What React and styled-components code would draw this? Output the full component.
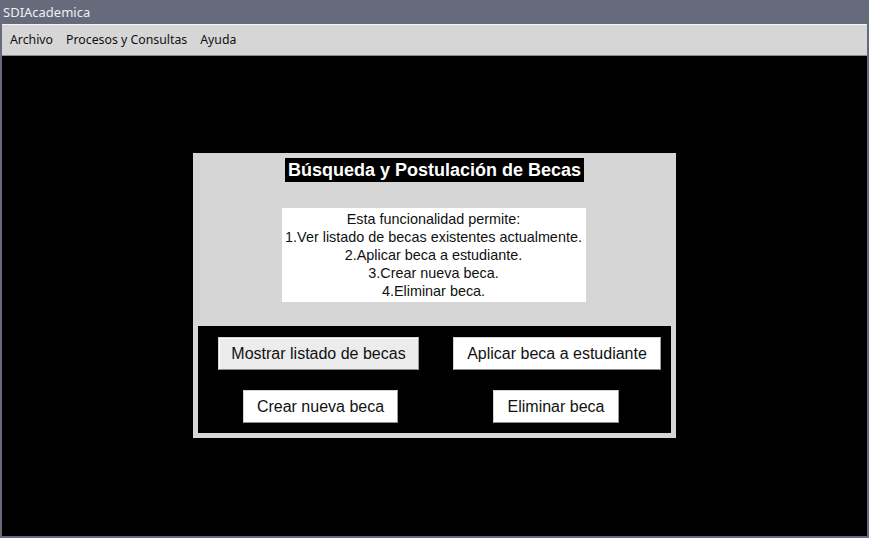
import React from "react";
import styled, { createGlobalStyle } from "styled-components";

const Global = createGlobalStyle`
  html, body { margin: 0; padding: 0; background: #656b7b; }
  body { width: 869px; height: 538px; overflow: hidden; }
  #root { width: 869px; height: 538px; }
`;

const Window = styled.div`
  width: 869px;
  height: 538px;
  display: flex;
  flex-direction: column;
  background: #656b7b;
  box-sizing: border-box;
`;

const TitleBar = styled.div`
  height: 24px;
  flex: none;
  display: flex;
  align-items: center;
  padding-left: 3px;
  font-family: "Noto Sans", "Open Sans", sans-serif;
  font-size: 13px;
  color: #eef0f4;
`;

const Frame = styled.div`
  flex: 1;
  display: flex;
  flex-direction: column;
  margin: 0 2px 2px 2px;
  min-height: 0;
`;

const MenuBar = styled.div`
  height: 32px;
  flex: none;
  box-sizing: border-box;
  display: flex;
  align-items: center;
  gap: 13px;
  padding: 0 0 1px 8px;
  background: #d6d6d6;
  border-top: 1px solid #f4f4f4;
  border-bottom: 1px solid #8d8d8d;
  font-family: "Noto Sans", "Open Sans", sans-serif;
  font-size: 12.3px;
  color: #111;
`;

const MenuItem = styled.span``;

const Desktop = styled.div`
  flex: 1;
  background: #000;
  display: flex;
  align-items: center;
  justify-content: center;
  padding-bottom: 1px;
`;

const Panel = styled.div`
  width: 483px;
  height: 285px;
  box-sizing: border-box;
  background: #d6d6d6;
  display: flex;
  flex-direction: column;
  align-items: center;
  padding: 5px;
`;

const Heading = styled.div`
  background: #000;
  color: #fff;
  font-family: "Liberation Sans", Arial, sans-serif;
  font-weight: bold;
  font-size: 18px;
  height: 24px;
  line-height: 24px;
  padding: 0 3px;
`;

const Description = styled.div`
  margin-top: 26px;
  margin-right: 2px;
  width: 304px;
  height: 94px;
  box-sizing: border-box;
  background: #fff;
  padding: 2px 0;
  text-align: center;
  font-family: "Liberation Sans", Arial, sans-serif;
  font-size: 14.4px;
  line-height: 18px;
  color: #111;
  white-space: nowrap;
`;

const Line = styled.div``;

const ButtonArea = styled.div`
  margin-top: auto;
  align-self: stretch;
  height: 107px;
  box-sizing: border-box;
  background: #000;
  display: grid;
  grid-template-columns: 243px 1fr;
  grid-template-rows: 33px 33px;
  row-gap: 20px;
  padding-top: 11px;
  justify-items: center;
`;

const Button = styled.button`
  height: 33px;
  box-sizing: border-box;
  width: ${(p) => p.$w}px;
  margin-left: ${(p) => p.$shift || 0}px;
  background: ${(p) => (p.$focused ? "#ececec" : "#ffffff")};
  border: 1px solid;
  border-color: #d4d4d4 #9a9a9a #8a8a8a #d4d4d4;
  box-shadow: inset 1px 1px 0 #ffffff;
  font-family: "Liberation Sans", Arial, sans-serif;
  font-size: 16px;
  color: #111;
  padding: 0;
  cursor: pointer;
`;

export default function App() {
  return (
    <>
      <Global />
      <Window>
        <TitleBar>SDIAcademica</TitleBar>
        <Frame>
          <MenuBar>
            <MenuItem>Archivo</MenuItem>
            <MenuItem>Procesos y Consultas</MenuItem>
            <MenuItem>Ayuda</MenuItem>
          </MenuBar>
          <Desktop>
            <Panel>
              <Heading>Búsqueda y Postulación de Becas</Heading>
              <Description>
                <Line>Esta funcionalidad permite:</Line>
                <Line>1.Ver listado de becas existentes actualmente.</Line>
                <Line>2.Aplicar beca a estudiante.</Line>
                <Line>3.Crear nueva beca.</Line>
                <Line>4.Eliminar beca.</Line>
              </Description>
              <ButtonArea>
                <Button $w={201} $shift={-2} $focused>Mostrar listado de becas</Button>
                <Button $w={208} $shift={2}>Aplicar beca a estudiante</Button>
                <Button $w={155} $shift={2}>Crear nueva beca</Button>
                <Button $w={126}>Eliminar beca</Button>
              </ButtonArea>
            </Panel>
          </Desktop>
        </Frame>
      </Window>
    </>
  );
}
